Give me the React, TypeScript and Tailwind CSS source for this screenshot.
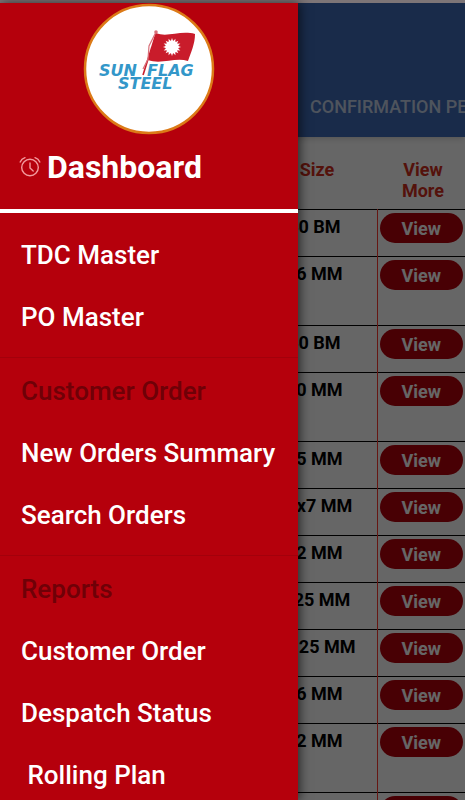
import { useState } from "react";

type Order = { size: string; tall?: boolean };

const orders: Order[] = [
  { size: "40 BM" },
  { size: "16 MM", tall: true },
  { size: "40 BM" },
  { size: "20 MM", tall: true },
  { size: "15 MM" },
  { size: "14x7 MM" },
  { size: "12 MM" },
  { size: "6.25 MM" },
  { size: "10.25 MM" },
  { size: "16 MM" },
  { size: "12 MM", tall: true },
  { size: "12 MM" },
];

const sections = [
  { title: "", items: ["TDC Master", "PO Master"] },
  { title: "Customer Order", items: ["New Orders Summary", "Search Orders"] },
  { title: "Reports", items: ["Customer Order", "Despatch Status", "\u00a0Rolling Plan"] },
];

// 16 rays around the sun disc
const rays = Array.from({ length: 16 }, (_, i) => i * 22.5);

function Logo() {
  return (
    <svg viewBox="0 0 132 132" className="size-33" role="img" aria-label="Sunflag Steel">
      <circle cx="66" cy="66" r="64" fill="#fff" stroke="#dc7a17" strokeWidth="2.5" />
      <path
        d="M73 30 C84 35 97 27 112 31 C112 41 108 49 105 58 C92 54 78 62 65 57 Z"
        fill="#c91c2b"
      />
      <g fill="#fff">
        <circle cx="89" cy="44" r="6.5" />
        {rays.map((r) => (
          <path key={r} d="M87.600 39 L89 35 L90.400 39 Z" transform={`rotate(${r} 89 44)`} />
        ))}
      </g>
      <path d="M73 31 L60 72" stroke="#c91c2b" strokeWidth="1.6" />
      <path d="M73 29 L66 43 L65 56 L60 66" fill="none" stroke="#d8707a" strokeWidth="1.2" />
      <circle cx="73" cy="29" r="1.8" fill="#d8707a" />
      <g
        fill="#3397c9"
        fontFamily="'DejaVu Sans', sans-serif"
        fontWeight="700"
        fontStyle="italic"
        fontSize="16"
      >
        <text x="16" y="73">SUN</text>
        <text x="64" y="73">FLAG</text>
        <text x="35" y="86">STEEL</text>
      </g>
    </svg>
  );
}

function AlarmIcon() {
  return (
    <svg
      viewBox="0 0 22 22"
      className="size-[22px]"
      fill="none"
      stroke="#f39a9e"
      strokeWidth="1.4"
      strokeLinecap="round"
    >
      <circle cx="11" cy="11.5" r="8.3" />
      <path d="M11 7v5l3.200 3" />
      <path d="M1.200 6C2 4 3.600 2.400 6 1.700M20.800 6C20 4 18.400 2.400 16 1.700" />
    </svg>
  );
}

function OrdersPage() {
  return (
    <main className="flex h-full flex-col bg-white pt-[3px]">
      <header className="flex h-[134px] shrink-0 items-end overflow-hidden bg-[#3f6cb8] shadow-md">
        <button className="ml-[310px] pb-[18px] text-lg leading-6 font-medium whitespace-nowrap text-white/70">
          CONFIRMATION PENDING
        </button>
      </header>
      <div className="flex justify-end">
        <table className="w-[210px] table-fixed border-collapse text-center text-lg font-bold">
          <thead>
            <tr className="h-[72px] align-top leading-[21px] text-[#d32f20]">
              <th className="w-[122px] pt-[22px] pl-[2px]">Size</th>
              <th className="pt-[22px] pr-4 pl-5">View More</th>
            </tr>
          </thead>
          <tbody>
            {orders.map((order, i) => (
              <tr
                key={i}
                className={`border-t border-black align-top ${order.tall ? "h-[69px]" : "h-[47px]"}`}
              >
                <td className="border-r border-r-[#ff3b30] pt-[5px] pr-[3px] leading-6 text-black">
                  {order.size}
                </td>
                <td className="px-[2px] pt-[3px]">
                  <button className="block h-[30px] w-full rounded-full bg-[#b5000c] pt-[2px] leading-6 text-white">
                    View
                  </button>
                </td>
              </tr>
            ))}
          </tbody>
        </table>
      </div>
    </main>
  );
}

function Drawer() {
  return (
    <aside className="absolute top-[3px] bottom-0 left-0 w-[64%] overflow-hidden bg-[#b5000c] text-white shadow-[2px_0_10px_rgba(0,0,0,0.6)]">
      <div className="h-[210px] border-b-4 border-white">
        <div className="flex justify-center">
          <Logo />
        </div>
        <div className="flex items-center gap-1.5 pt-3 pl-[19px]">
          <AlarmIcon />
          <h1 className="text-[32px] leading-10 font-bold">Dashboard</h1>
        </div>
      </div>
      <nav className="pt-[11px] text-[26px] font-medium">
        {sections.map((section) => (
          <div
            key={section.title}
            className={section.title ? "mt-[9px] border-t border-[#a3000b] pt-[2px]" : ""}
          >
            {section.title && (
              <h2 className="pl-[21px] leading-[62px] text-[#6f0007]">{section.title}</h2>
            )}
            {section.items.map((item) => (
              <a key={item} href="#" className="block pl-[21px] leading-[62px] whitespace-nowrap">
                {item}
              </a>
            ))}
          </div>
        ))}
      </nav>
    </aside>
  );
}

export default function App() {
  const [open, setOpen] = useState(true);

  return (
    <div className="relative h-screen overflow-hidden font-['Roboto',sans-serif]">
      <OrdersPage />
      {open && (
        <>
          <div className="absolute inset-0 bg-black/60" onClick={() => setOpen(false)} />
          <div className="absolute inset-x-0 top-0 h-[3px] bg-[#7d7577]" />
          <Drawer />
        </>
      )}
    </div>
  );
}
